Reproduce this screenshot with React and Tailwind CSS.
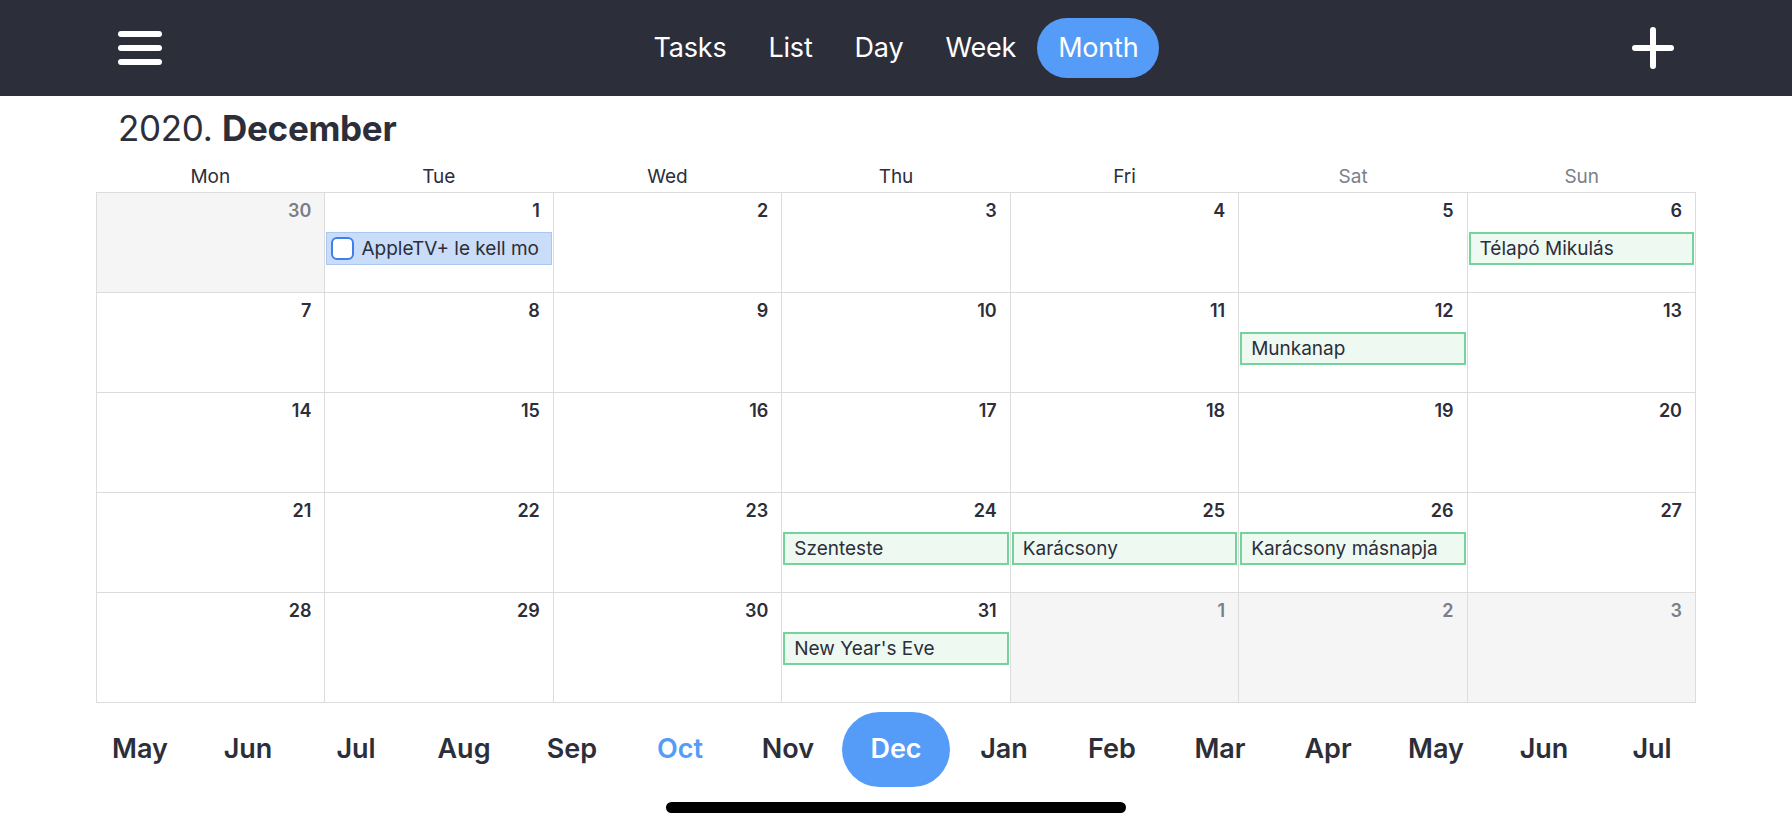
import React from "react";

const DARK = "text-[#2c2e3a]";

function Hamburger() {
  return (
    <div className="flex flex-col gap-[8px] w-[44px]">
      <div className="h-[6px] rounded-full bg-white" />
      <div className="h-[6px] rounded-full bg-white" />
      <div className="h-[6px] rounded-full bg-white" />
    </div>
  );
}

function Plus() {
  return (
    <svg width="42" height="42" viewBox="0 0 42 42" fill="none">
      <path d="M21 3v36M3 21h36" stroke="white" strokeWidth="6" strokeLinecap="round" />
    </svg>
  );
}

const weeks = [
  [
    { d: 30, out: true },
    { d: 1, task: "AppleTV+ le kell mo" },
    { d: 2 },
    { d: 3 },
    { d: 4 },
    { d: 5 },
    { d: 6, ev: "Télapó Mikulás" },
  ],
  [
    { d: 7 },
    { d: 8 },
    { d: 9 },
    { d: 10 },
    { d: 11 },
    { d: 12, ev: "Munkanap" },
    { d: 13 },
  ],
  [
    { d: 14 },
    { d: 15 },
    { d: 16 },
    { d: 17 },
    { d: 18 },
    { d: 19 },
    { d: 20 },
  ],
  [
    { d: 21 },
    { d: 22 },
    { d: 23 },
    { d: 24, ev: "Szenteste" },
    { d: 25, ev: "Karácsony" },
    { d: 26, ev: "Karácsony másnapja" },
    { d: 27 },
  ],
  [
    { d: 28 },
    { d: 29 },
    { d: 30 },
    { d: 31, ev: "New Year's Eve" },
    { d: 1, out: true },
    { d: 2, out: true },
    { d: 3, out: true },
  ],
];

const months = ["May", "Jun", "Jul", "Aug", "Sep", "Oct", "Nov", "Dec", "Jan", "Feb", "Mar", "Apr", "May", "Jun", "Jul"];

function Cell({ c, tall }) {
  return (
    <div
      className={
        "flex flex-col border-r border-b border-[#dcdcdc] min-w-0 " +
        (tall ? "h-[110px] " : "h-[100px] ") +
        (c.out ? "bg-[#f5f5f5]" : "bg-white")
      }
    >
      <div
        className={
          "pt-[6px] pr-[13px] text-right text-[18px] leading-[24px] font-semibold " +
          (c.out ? "text-[#7a7e88]" : DARK)
        }
      >
        {c.d}
      </div>
      {c.ev && (
        <div className="mt-[9px] mx-[1px] h-[33px] flex items-center border-2 border-[#74d29b] bg-[#eef9f2] pl-[9px] pt-[2px] overflow-hidden whitespace-nowrap">
          <span className={"text-[19px] " + DARK}>{c.ev}</span>
        </div>
      )}
      {c.task && (
        <div className="mt-[9px] mx-[1px] h-[33px] flex items-center border border-[#a9c8f1] bg-[#c9ddf8] pl-[4px] overflow-hidden whitespace-nowrap">
          <div className="w-[23px] h-[23px] shrink-0 rounded-[6px] border-[2.5px] border-[#3d7ff0] bg-white" />
          <span className={"ml-[7px] pt-[2px] text-[19px] " + DARK}>{c.task}</span>
        </div>
      )}
    </div>
  );
}

export default function App() {
  return (
    <div
      className="w-[1792px] h-[828px] bg-white flex flex-col overflow-hidden"
      style={{ fontFamily: "Inter, 'Noto Sans', sans-serif" }}
    >
      <header className="h-[96px] shrink-0 bg-[#2c2e3a] grid grid-cols-[1fr_auto_1fr] items-center px-[118px]">
        <div className="flex items-center">
          <Hamburger />
        </div>
        <nav className="flex items-center text-white text-[27px] tracking-[-0.2px]">
          {["Tasks", "List", "Day", "Week"].map((t) => (
            <div key={t} className="px-[21px] h-[60px] flex items-center">
              {t}
            </div>
          ))}
          <div className="px-[21px] h-[60px] flex items-center rounded-full bg-[#549cf7]">Month</div>
        </nav>
        <div className="flex justify-end items-center">
          <Plus />
        </div>
      </header>

      <div className={"pl-[118px] pt-[10px] text-[35px] leading-[44px] tracking-[-0.3px] " + DARK}>
        2020. <span className="font-bold">December</span>
      </div>

      <div className="mx-[96px] mt-[15px] grid grid-cols-7 text-[19px] leading-[24px]">
        {["Mon", "Tue", "Wed", "Thu", "Fri", "Sat", "Sun"].map((d, i) => (
          <div key={d} className={"text-center " + (i >= 5 ? "text-[#7c808a]" : DARK)}>
            {d}
          </div>
        ))}
      </div>

      <div className="mx-[96px] mt-[3px] grid grid-cols-7 border-t border-l border-[#dcdcdc]">
        {weeks.map((w, wi) => w.map((c, ci) => <Cell key={wi + "-" + ci} c={c} tall={wi === 4} />))}
      </div>

      <div className="mt-[9px] flex justify-center">
        {months.map((m, i) => (
          <div
            key={i}
            className={
              "w-[108px] h-[75px] flex items-center justify-center text-[27px] font-semibold " +
              (m === "Dec" && i === 7
                ? "bg-[#549cf7] text-white rounded-full"
                : m === "Oct"
                ? "text-[#549cf7]"
                : DARK)
            }
          >
            {m}
          </div>
        ))}
      </div>

      <div className="mt-[15px] flex justify-center">
        <div className="w-[460px] h-[11px] rounded-full bg-black" />
      </div>
    </div>
  );
}
